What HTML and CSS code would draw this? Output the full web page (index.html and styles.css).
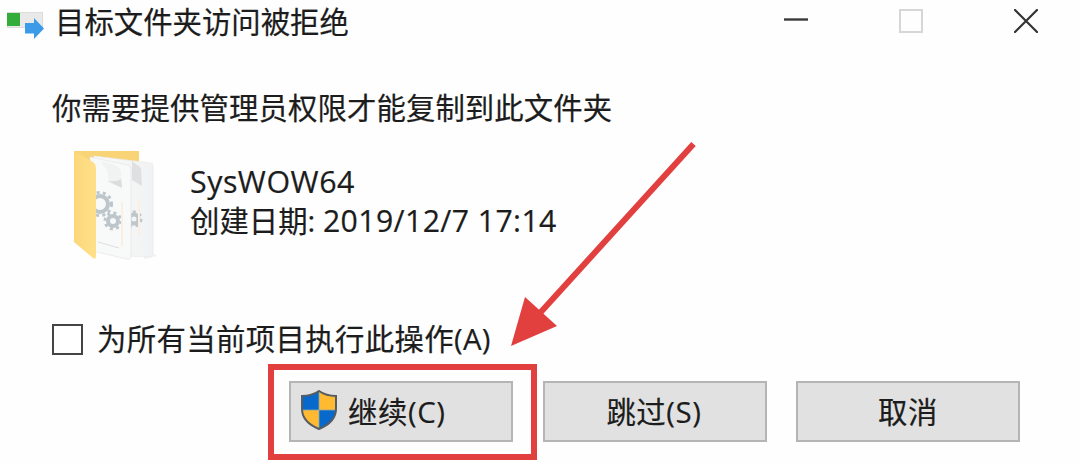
FILE: index.html
```
<!DOCTYPE html>
<html lang="zh-CN">
<head>
    <meta charset="UTF-8">
    <meta name="viewport" content="width=device-width, initial-scale=1.0">
    <title>目标文件夹访问被拒绝</title>
    <link rel="stylesheet" href="styles.css">
</head>
<body>
    <div class="dialog">
        <header class="title-bar">
            <svg class="copy-icon" width="38" height="30" viewBox="0 0 38 30">
                <rect x="0.5" y="2.5" width="35" height="15" fill="#e9e9e9" stroke="#dcdcdc"/>
                <rect x="0" y="3" width="13" height="13" fill="#32ad3c"/>
                <path d="M18 13h9V8l10 10.500-10 10.500v-5.500H18z" fill="#3b9be9"/>
            </svg>
            <h1 class="title">目标文件夹访问被拒绝</h1>
            <div class="window-controls">
                <svg width="24" height="24" viewBox="0 0 24 24"><path d="M0 10.500h24" stroke="#3a3a3a" stroke-width="2.400"/></svg>
                <svg width="24" height="24" viewBox="0 0 24 24"><rect x="1" y="1" width="22" height="22" fill="none" stroke="#d6d6d6" stroke-width="2"/></svg>
                <svg width="24" height="24" viewBox="0 0 24 24"><path d="M1 1l22 22M23 1L1 23" stroke="#333" stroke-width="2.200" stroke-linecap="round"/></svg>
            </div>
        </header>

        <main class="content">
            <p class="message">你需要提供管理员权限才能复制到此文件夹</p>

            <div class="folder">
                <svg class="folder-icon" width="90" height="114" viewBox="0 0 90 114">
                    <defs>
                        <linearGradient id="cover" x1="0" x2="1">
                            <stop offset="0" stop-color="#fbd77a"/>
                            <stop offset="1" stop-color="#ffe08a"/>
                        </linearGradient>
                        <linearGradient id="paper" x1="0" x2="1">
                            <stop offset="0" stop-color="#fafafa"/>
                            <stop offset="1" stop-color="#f1f2f3"/>
                        </linearGradient>
                    </defs>
                    <path d="M72 99l13 9-13 3z" fill="#f2f2f2"/>
                    <path d="M2 3h65v80H22z" fill="#f8d477"/>
                    <path d="M22 8l57 7q2 0 2 3v86q0 5-3 5l-21-1-35-5z" fill="url(#paper)" stroke="#e9e9e9" stroke-width=".7"/>
                    <path d="M60 13l9 7 1 18-10-6z" fill="#dfe0e1"/>
                    <g class="gear" transform="translate(62 71)">
                        <circle r="4.500"/><circle class="teeth" r="7"/>
                    </g>
                    <path d="M67 52v36" stroke="#fbeee2" stroke-width="2"/>
                    <path d="M18 9l38 8q3 1 3 4v87q0 4-4 3l-34-8z" fill="#f8f9f9" stroke="#e5e5e5" stroke-width=".7"/>
                    <path d="M29 14q9 9 7 20l14 6-1-17q-3-8-20-9z" fill="#f1f2f2"/>
                    <path d="M36 33l14 7-1-9q-4 3-13 2z" fill="#dadcde"/>
                    <g class="gear" transform="translate(28 56)">
                        <circle r="8"/><circle class="teeth" r="11.500"/>
                    </g>
                    <g class="gear" transform="translate(41 73)">
                        <circle r="5"/><circle class="teeth" r="8"/>
                    </g>
                    <path d="M50 54v44" stroke="#fbeee2" stroke-width="2"/>
                    <path d="M26 94l21 6" stroke="#dedede"/>
                    <path d="M2 3l19 11q3 2 3 5v89q0 4-3 2L2 94z" fill="url(#cover)"/>
                </svg>
                <div class="folder-info">
                    <p class="folder-name">SysWOW64</p>
                    <p class="folder-date">创建日期: <span class="date">2019/12/7 17:14</span></p>
                </div>
            </div>

            <label class="apply-all">
                <input class="checkbox" type="checkbox">
                <span>为所有当前项目执行此操作(A)</span>
            </label>

            <div class="actions">
                <div class="highlight">
                    <button class="btn btn-continue">
                        <svg class="shield" width="36" height="40" viewBox="0 0 36 40">
                            <clipPath id="shieldClip">
                                <path d="M18 1q7 5 17 5v13q0 13-17 20Q1 32 1 19V6q10 0 17-5z"/>
                            </clipPath>
                            <g clip-path="url(#shieldClip)">
                                <path d="M0 0h18v20H0zM18 20h18v20H18z" fill="#0869cc"/>
                                <path d="M18 0h18v20H18zM0 20h18v20H0z" fill="#ffba32"/>
                                <path d="M18 0v40M0 20h36" stroke="#8aa6a6" stroke-width=".8"/>
                            </g>
                            <path d="M18 1q7 5 17 5v13q0 13-17 20Q1 32 1 19V6q10 0 17-5z" fill="none" stroke="#555d62" stroke-width="2"/>
                        </svg>
                        <span>继续(C)</span>
                    </button>
                </div>
                <button class="btn">跳过(S)</button>
                <button class="btn btn-cancel">取消</button>
            </div>
        </main>

        <svg class="arrow" width="190" height="210" viewBox="0 0 190 210">
            <path d="M183.500 5L30 174" stroke="#e23f3f" stroke-width="6"/>
            <path d="M1 207l14-49 32 29z" fill="#e23f3f"/>
        </svg>
    </div>
</body>
</html>
```
FILE: styles.css
```
* {
    box-sizing: border-box;
}

body {
    margin: 0;
    background: #fefefe;
    color: #1c1c1c;
    font-family: 'Open Sans', 'Noto Sans CJK SC', sans-serif;
    font-size: 29.4px;
    line-height: 40px;
    overflow: hidden;
    -webkit-text-stroke: 0.2px #1c1c1c;
}

h1, p {
    margin: 0;
    font-size: inherit;
    font-weight: normal;
    white-space: nowrap;
}

.dialog {
    position: relative;
    width: 1080px;
    height: 463px;
}

.title-bar {
    display: flex;
    align-items: flex-start;
    height: 88px;
    padding: 2px 42px 0 7px;
}

.copy-icon {
    margin: 8px 10px 0 0;
}

.window-controls {
    display: flex;
    gap: 91px;
    margin: 7px 0 0 auto;
}

.content {
    padding-left: 52px;
}

.message {
    letter-spacing: 0.1px;
}

.folder {
    display: flex;
    height: 114px;
    margin-top: 20px;
    padding-left: 20px;
}

.folder-info {
    padding: 14px 0 0 28px;
}

.folder-name {
    height: 39px;
    font-size: 30.4px;
    letter-spacing: 0.5px;
}

.date {
    font-size: 30.2px;
    letter-spacing: 0.4px;
}

/* small gears printed on the sheets */
.gear {
    fill: none;
    stroke: #bcc6cb;
    stroke-width: 4;
}

.gear .teeth {
    stroke-width: 3;
    stroke-dasharray: 3 3.3;
}

.apply-all {
    display: flex;
    align-items: center;
    gap: 14px;
    width: 460px;
    height: 40px;
    margin-top: 57px;
    letter-spacing: 0.35px;
    white-space: nowrap;
}

.checkbox {
    appearance: none;
    flex: none;
    width: 31px;
    height: 31px;
    margin: 0;
    border: 2px solid #444;
    background: #fff;
}

.actions {
    display: flex;
    align-items: flex-start;
    height: 96px;
    margin: 5px 0 0 216px;
}

.highlight {
    width: 269px;
    height: 96px;
    margin-right: 6px;
    padding: 11px 15px;
    border: 6px solid #e23f3f;
}

.btn {
    display: flex;
    align-items: center;
    justify-content: center;
    width: 224px;
    height: 61px;
    margin-top: 17px;
    padding: 0 2px 0 0;
    border: 2px solid #b5b5b5;
    background: #e1e1e1;
    color: inherit;
    font: inherit;
    letter-spacing: 0.6px;
}

.btn-continue {
    justify-content: flex-start;
    gap: 11px;
    margin-top: 0;
    padding: 0 0 0 10px;
}

.shield {
    margin-top: -3px;
}

.btn-cancel {
    margin-left: 29px;
    padding: 0;
}

/* pointer drawn over the dialog */
.arrow {
    position: absolute;
    left: 510px;
    top: 139px;
}
```
